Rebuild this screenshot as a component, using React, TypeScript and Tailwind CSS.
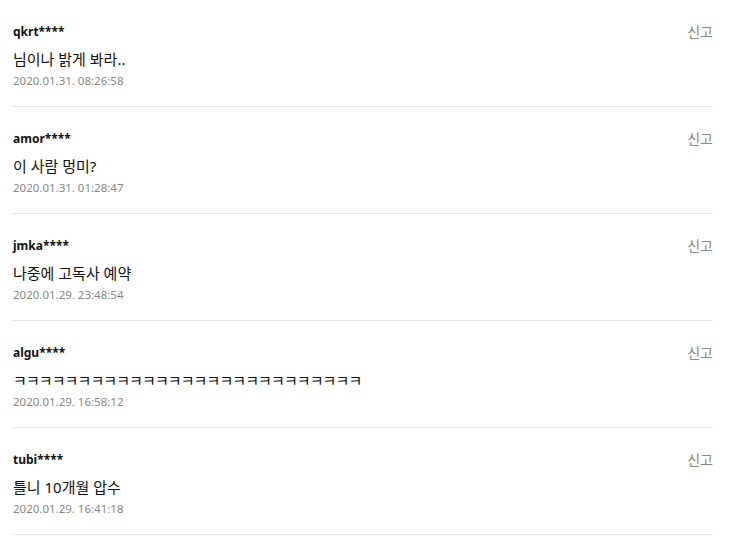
const comments = [
  { user: 'qkrt****', text: '님이나 밝게 봐라..', date: '2020.01.31. 08:26:58' },
  { user: 'amor****', text: '이 사람 멍미?', date: '2020.01.31. 01:28:47' },
  { user: 'jmka****', text: '나중에 고독사 예약', date: '2020.01.29. 23:48:54' },
  { user: 'algu****', text: 'ㅋㅋㅋㅋㅋㅋㅋㅋㅋㅋㅋㅋㅋㅋㅋㅋㅋㅋㅋㅋㅋㅋㅋㅋㅋㅋㅋ', date: '2020.01.29. 16:58:12', tight: true },
  { user: 'tubi****', text: '틀니 10개월 압수', date: '2020.01.29. 16:41:18' },
]

const App = () => {
  return (
    <div className="min-h-screen bg-white font-['Noto_Sans','Noto_Sans_CJK_KR',sans-serif]">
      <ul className="ml-[13px] w-[700px]">
        {comments.map((c) => (
          <li key={c.user} className="flex justify-between border-b border-[#e3e3e3] pt-[23px] pb-[17px]">
            <div className="flex flex-col">
              <span className="text-[12px] leading-[18px] font-bold text-[#111]">{c.user}</span>
              <p className={c.tight ? 'mt-[7px] text-[15px] leading-[22px] tracking-[-0.9px] text-[#111]' : 'mt-[7px] text-[15px] leading-[22px] text-[#111]'}>{c.text}</p>
              <span className="mt-[3px] text-[11.5px] leading-[16px] text-[#888]">{c.date}</span>
            </div>
            <button className="h-[18px] text-[14px] leading-[18px] text-[#888]">신고</button>
          </li>
        ))}
      </ul>
    </div>
  )
}

export default App
